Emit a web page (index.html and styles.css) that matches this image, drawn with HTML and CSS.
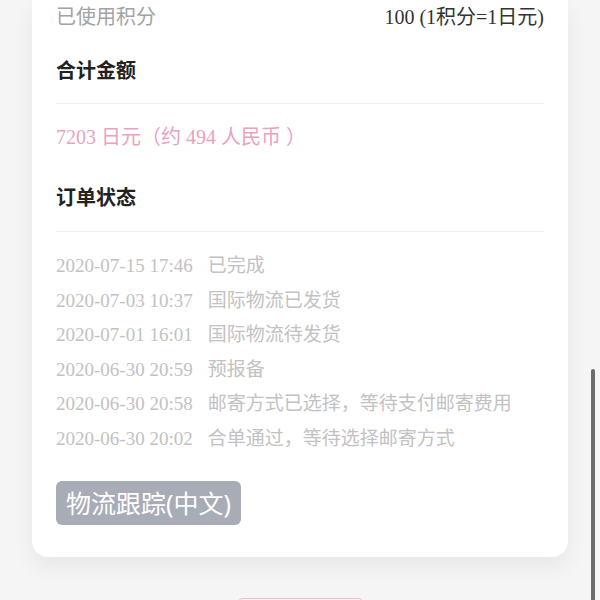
FILE: index.html
```html
<!DOCTYPE html>
<html lang="zh-CN">
<head>
    <meta charset="UTF-8">
    <meta name="viewport" content="width=device-width, initial-scale=1.0">
    <title>订单详情</title>
    <link rel="stylesheet" href="styles.css">
</head>
<body>
    <div class="card">
        <div class="info-row">
            <span class="info-label">已使用积分</span>
            <span class="info-value">100 (1积分=1日元)</span>
        </div>

        <div class="section-title">合计金额</div>
        <div class="amount">7203 日元（约 494 人民币 ）</div>

        <div class="section-title">订单状态</div>
        <ul class="status-list">
            <li><span class="status-time">2020-07-15 17:46</span><span>已完成</span></li>
            <li><span class="status-time">2020-07-03 10:37</span><span>国际物流已发货</span></li>
            <li><span class="status-time">2020-07-01 16:01</span><span>国际物流待发货</span></li>
            <li><span class="status-time">2020-06-30 20:59</span><span>预报备</span></li>
            <li><span class="status-time">2020-06-30 20:58</span><span>邮寄方式已选择，等待支付邮寄费用</span></li>
            <li><span class="status-time">2020-06-30 20:02</span><span>合单通过，等待选择邮寄方式</span></li>
        </ul>

        <button class="btn-track">物流跟踪(中文)</button>
    </div>

    <div class="next-btn"></div>

    <div class="scroll-thumb"></div>
</body>
</html>
```

FILE: styles.css
```css
* {
    margin: 0;
    padding: 0;
    box-sizing: border-box;
}

html, body {
    height: 100%;
    overflow: hidden;
}

body {
    font-family: 'Liberation Serif', 'Noto Sans CJK SC', serif;
    background: #f5f5f5;
    padding: 0 32px;
}

.card {
    background: #fff;
    border-radius: 0 0 16px 16px;
    box-shadow: 0 10px 22px rgba(0, 0, 0, 0.06);
    padding: 0 24px 32px;
}

.info-row {
    display: flex;
    justify-content: space-between;
    font-size: 20px;
    line-height: 34px;
}

.info-label {
    color: #a3a3a3;
}

.info-value {
    color: #333;
}

.section-title {
    font-family: 'Noto Sans CJK SC', sans-serif;
    font-weight: 700;
    font-size: 20px;
    line-height: 28px;
    color: #222;
    padding: 22px 0 19px;
    border-bottom: 1px solid #eee;
}

.amount {
    font-size: 20px;
    line-height: 28px;
    color: #eaa2bd;
    margin-top: 19px;
    margin-bottom: 10px;
}

.amount + .section-title {
    padding-top: 22px;
    padding-bottom: 20px;
}

.status-list {
    list-style: none;
    padding-top: 17px;
    font-size: 19px;
    line-height: 34.6px;
    color: #c2c2c2;
}

.status-list li {
    display: flex;
    gap: 15px;
}

.btn-track {
    display: block;
    margin-top: 24px;
    height: 44px;
    padding: 0 10px;
    border: none;
    border-radius: 6px;
    background: #a8acb7;
    color: #fff;
    font-family: 'Noto Sans', 'Noto Sans CJK SC', sans-serif;
    font-size: 25px;
    line-height: 44px;
}

.next-btn {
    width: 127px;
    height: 40px;
    margin: 41px auto 0;
    border: 1px solid #f0bccb;
    border-radius: 6px;
}

.scroll-thumb {
    position: fixed;
    right: 5px;
    top: 369px;
    width: 4px;
    height: 240px;
    border-radius: 2px;
    background: #6b6b6b;
}
```
